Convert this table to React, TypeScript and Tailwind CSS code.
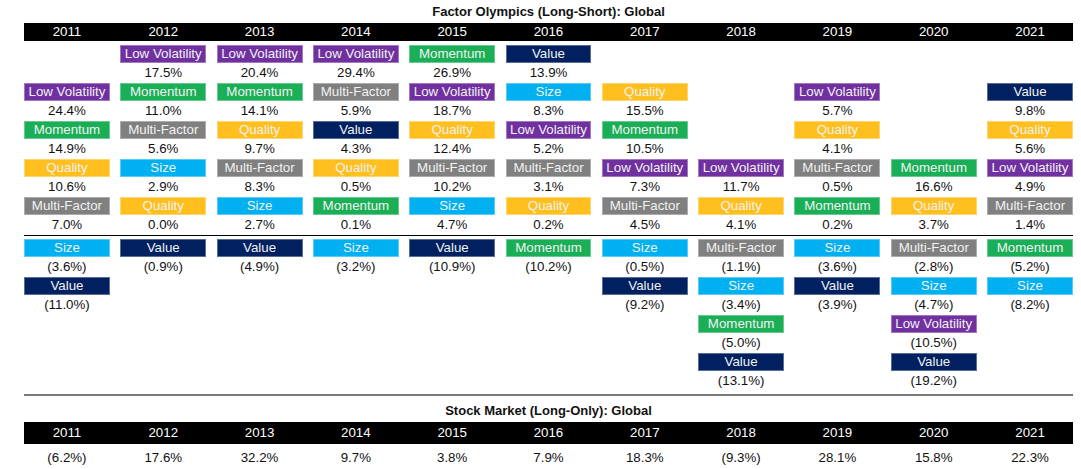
import React from "react";

type Factor = "lv" | "mom" | "mf" | "q" | "size" | "val";

const FACTORS: Record<Factor, { label: string; cls: string }> = {
  lv: { label: "Low Volatility", cls: "bg-[#7030a0]" },
  mom: { label: "Momentum", cls: "bg-[#1aae57]" },
  mf: { label: "Multi-Factor", cls: "bg-[#808080]" },
  q: { label: "Quality", cls: "bg-[#ffbf1f]" },
  size: { label: "Size", cls: "bg-[#00b0f0]" },
  val: { label: "Value", cls: "bg-[#002060]" },
};

type Entry = [Factor, string];

// gagnants (empilés vers le bas) puis perdants (empilés vers le haut)
const YEARS: { year: string; up: Entry[]; down: Entry[] }[] = [
  { year: "2011", up: [["lv", "24.4%"], ["mom", "14.9%"], ["q", "10.6%"], ["mf", "7.0%"]], down: [["size", "(3.6%)"], ["val", "(11.0%)"]] },
  { year: "2012", up: [["lv", "17.5%"], ["mom", "11.0%"], ["mf", "5.6%"], ["size", "2.9%"], ["q", "0.0%"]], down: [["val", "(0.9%)"]] },
  { year: "2013", up: [["lv", "20.4%"], ["mom", "14.1%"], ["q", "9.7%"], ["mf", "8.3%"], ["size", "2.7%"]], down: [["val", "(4.9%)"]] },
  { year: "2014", up: [["lv", "29.4%"], ["mf", "5.9%"], ["val", "4.3%"], ["q", "0.5%"], ["mom", "0.1%"]], down: [["size", "(3.2%)"]] },
  { year: "2015", up: [["mom", "26.9%"], ["lv", "18.7%"], ["q", "12.4%"], ["mf", "10.2%"], ["size", "4.7%"]], down: [["val", "(10.9%)"]] },
  { year: "2016", up: [["val", "13.9%"], ["size", "8.3%"], ["lv", "5.2%"], ["mf", "3.1%"], ["q", "0.2%"]], down: [["mom", "(10.2%)"]] },
  { year: "2017", up: [["q", "15.5%"], ["mom", "10.5%"], ["lv", "7.3%"], ["mf", "4.5%"]], down: [["size", "(0.5%)"], ["val", "(9.2%)"]] },
  { year: "2018", up: [["lv", "11.7%"], ["q", "4.1%"]], down: [["mf", "(1.1%)"], ["size", "(3.4%)"], ["mom", "(5.0%)"], ["val", "(13.1%)"]] },
  { year: "2019", up: [["lv", "5.7%"], ["q", "4.1%"], ["mf", "0.5%"], ["mom", "0.2%"]], down: [["size", "(3.6%)"], ["val", "(3.9%)"]] },
  { year: "2020", up: [["mom", "16.6%"], ["q", "3.7%"]], down: [["mf", "(2.8%)"], ["size", "(4.7%)"], ["lv", "(10.5%)"], ["val", "(19.2%)"]] },
  { year: "2021", up: [["val", "9.8%"], ["q", "5.6%"], ["lv", "4.9%"], ["mf", "1.4%"]], down: [["mom", "(5.2%)"], ["size", "(8.2%)"]] },
];

const MARKET = ["(6.2%)", "17.6%", "32.2%", "9.7%", "3.8%", "7.9%", "18.3%", "(9.3%)", "28.1%", "15.8%", "22.3%"];

const GRID = "grid grid-cols-11 gap-x-[10.4px]";

function Cell({ entry }: { entry: Entry }) {
  const f = FACTORS[entry[0]];
  return (
    <div className="flex h-[38px] flex-col">
      <div
        className={`${f.cls} flex h-[18px] items-center justify-center border border-white/35 text-[13.3px] leading-none text-[#f2f2f2]`}
      >
        {f.label}
      </div>
      <div className="flex h-[20px] items-center justify-center text-[13.3px] leading-none text-[#111]">{entry[1]}</div>
    </div>
  );
}

function YearBar({ tall }: { tall?: boolean }) {
  return (
    <div className={`${GRID} bg-black ${tall ? "h-[22px]" : "h-[18px]"}`}>
      {YEARS.map((y) => (
        <div key={y.year} className="flex items-center justify-center text-[13.3px] leading-none text-white">
          {y.year}
        </div>
      ))}
    </div>
  );
}

export default function App() {
  return (
    <div className="h-[469px] w-[1081px] overflow-hidden bg-white font-['Liberation_Sans',Arial,sans-serif]">
      <div className="ml-[24px] w-[1049px]">
        <h1 className="flex h-[23px] items-center justify-center text-[13px] font-bold leading-none text-[#111]">
          Factor Olympics (Long-Short): Global
        </h1>
        <YearBar />

        <div className={`${GRID} h-[194px] pt-[3px]`}>
          {YEARS.map((y) => (
            <div key={y.year} className="flex flex-col justify-end">
              {y.up.map((e) => (
                <Cell key={e[0]} entry={e} />
              ))}
            </div>
          ))}
        </div>

        <div className="h-px bg-black" />

        <div className={`${GRID} h-[158px] pt-[3px]`}>
          {YEARS.map((y) => (
            <div key={y.year} className="flex flex-col">
              {y.down.map((e) => (
                <Cell key={e[0]} entry={e} />
              ))}
            </div>
          ))}
        </div>

        <div className="h-[2px] bg-[#7a7a7a]" />

        <h2 className="flex h-[26px] items-center justify-center pt-[3px] text-[13px] font-bold leading-none text-[#111]">
          Stock Market (Long-Only): Global
        </h2>
        <YearBar tall />

        <div className={`${GRID} h-[27px]`}>
          {MARKET.map((v, i) => (
            <div key={i} className="flex items-center justify-center text-[13.3px] leading-none text-[#111]">
              {v}
            </div>
          ))}
        </div>
      </div>
    </div>
  );
}
